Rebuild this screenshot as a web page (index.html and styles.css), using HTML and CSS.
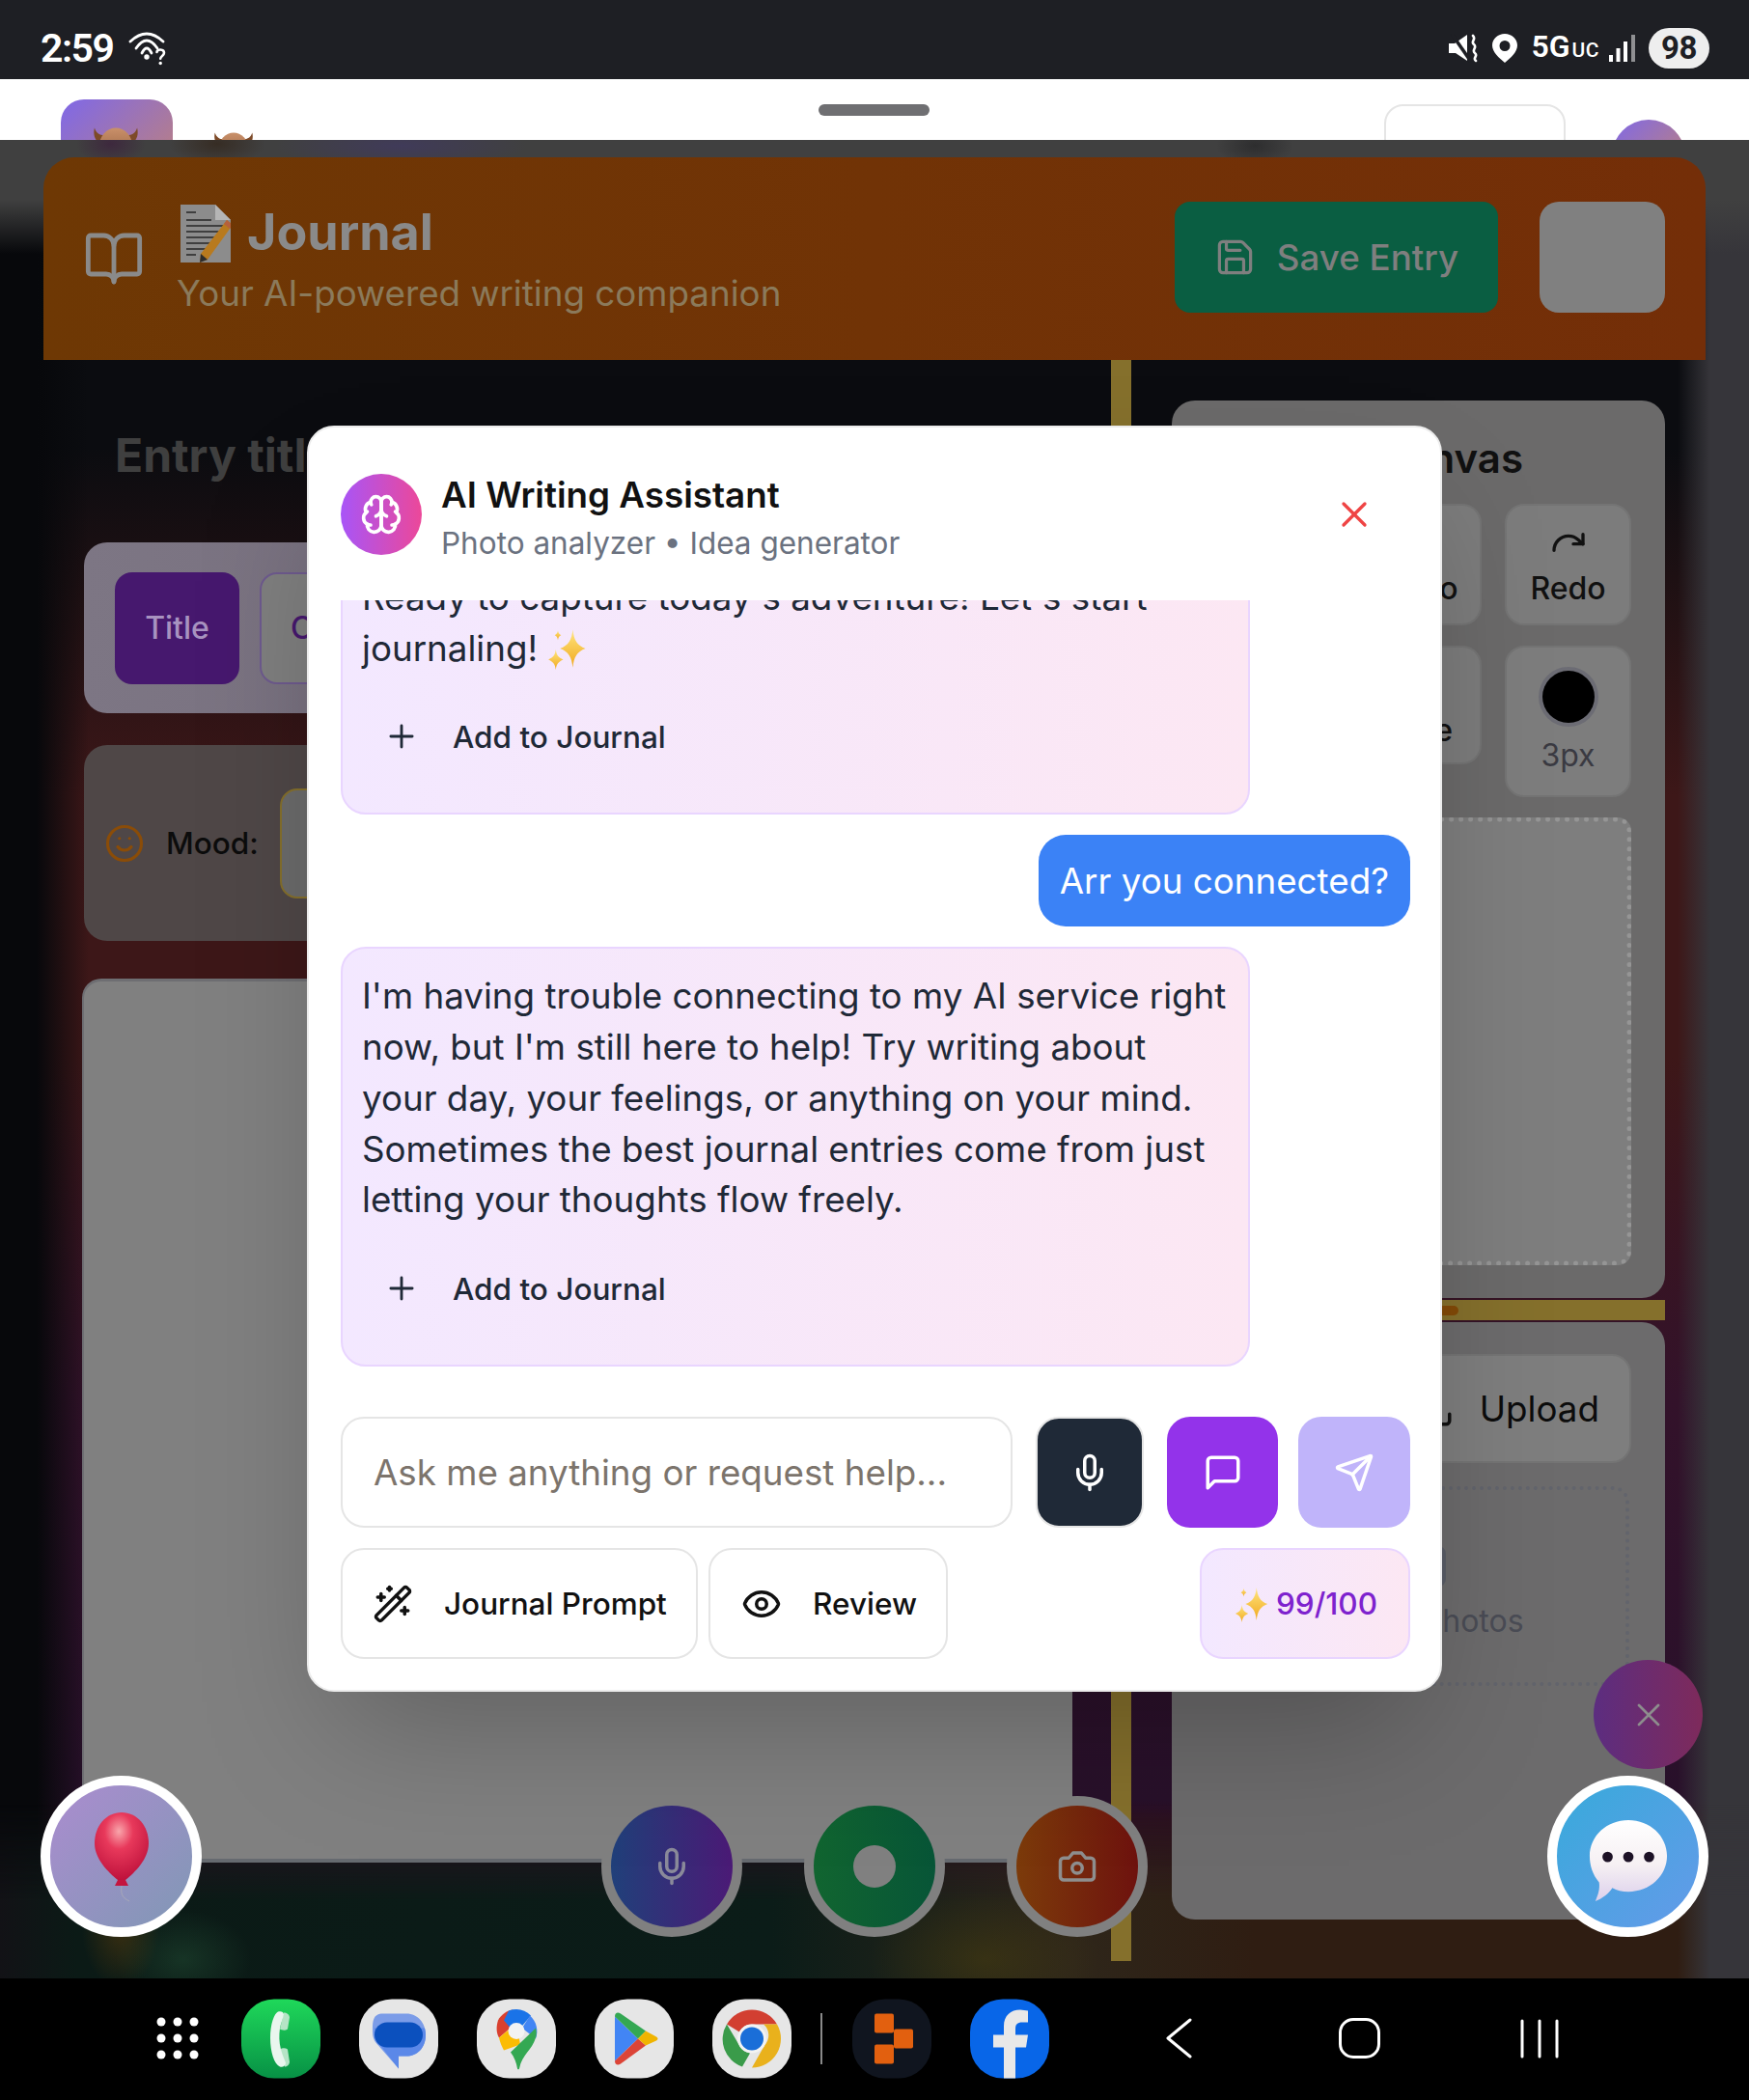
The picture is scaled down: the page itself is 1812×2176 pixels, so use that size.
FILE: index.html
```html
<!DOCTYPE html>
<html lang="en">
<head>
<meta charset="utf-8">
<title>AI Writing Assistant</title>
<link rel="stylesheet" href="styles.css">
</head>
<body>
<div class="device">
  <header class="statusbar">
    <div class="status-left">
      <span class="clock">2:59</span>
      <svg class="wifi" viewBox="0 0 40 36" fill="none" stroke="#fff" stroke-width="2.800" stroke-linecap="round"><path d="M2 10Q19-6 36 10"/><path d="M8 17Q19 1 30 17"/><path d="M14 22Q19 12 24 22"/><circle cx="19" cy="26" r="2.700" fill="#fff" stroke="none"/><path d="M29.500 21c0-3.500 7.500-3.500 7.500.8 0 3-3.800 3.200-3.800 6" stroke-width="2.600"/><circle cx="33.200" cy="32.500" r="1.700" fill="#fff" stroke="none"/></svg>
    </div>
    <div class="status-right">
      <svg class="mute" viewBox="0 0 30 30"><path d="M0 10h6L19 1v27L7 20H0z" fill="#fff"/><path d="M3 0l20 29" stroke="#1e1f24" stroke-width="3.500"/><path d="M25 2c4 4-3 6 1 9s-3 6 1 9-3 5 1 8" stroke="#fff" stroke-width="2.600" fill="none" stroke-linecap="round"/></svg>
      <svg class="pin" viewBox="0 0 26 30"><path fill-rule="evenodd" d="M13 0c7 0 13 5 13 12 0 7-7 13-13 18C7 25 0 19 0 12 0 5 6 0 13 0zm0 7a5.500 5.500 0 1 0 0 11 5.500 5.500 0 0 0 0-11z" fill="#fff"/></svg>
      <span class="net">5G<small>UC</small></span>
      <svg class="signal" viewBox="0 0 27 28" fill="#fff"><rect x="0" y="21" width="4" height="7"/><rect x="7.500" y="14" width="4" height="14"/><rect x="15" y="7" width="4" height="21"/><rect x="23" y="0" width="4" height="28" opacity=".5"/></svg>
      <span class="battery">98</span>
    </div>
  </header>

  <div class="topbar">
    <div class="top-brand">
      <div class="top-logo"><svg class="top-emoji" viewBox="0 0 50 30"><defs><linearGradient id="gdome" x1="0" y1="0" x2="0" y2="1"><stop offset="0" stop-color="#c9906a"/><stop offset="1" stop-color="#8f5a38"/></linearGradient></defs><path d="M2 0c2 6 6 8 10 8l-2 10C3 15 0 8 2 0zM48 0c-2 6-6 8-10 8l2 10c7-3 10-10 8-18z" fill="#7d4a28"/><ellipse cx="25" cy="20" rx="18" ry="20" fill="url(#gdome)"/></svg></div>
      <svg class="top-emoji small" viewBox="0 0 50 30"><path d="M2 0c2 6 6 8 10 8l-2 10C3 15 0 8 2 0zM48 0c-2 6-6 8-10 8l2 10c7-3 10-10 8-18z" fill="#7d4a28"/><ellipse cx="25" cy="20" rx="18" ry="20" fill="url(#gdome)"/></svg>
    </div>
    <div class="handle"></div>
    <div class="top-actions">
      <div class="ghost-btn"></div>
      <div class="top-avatar"></div>
    </div>
  </div>

  <main class="page">
    <section class="hero">
      <div class="hero-left">
        <svg class="ic hero-book" viewBox="0 0 24 24"><path d="M12 7v14"/><path d="M3 18a1 1 0 0 1-1-1V4a1 1 0 0 1 1-1h5a4 4 0 0 1 4 4 4 4 0 0 1 4-4h5a1 1 0 0 1 1 1v13a1 1 0 0 1-1 1h-6a3 3 0 0 0-3 3 3 3 0 0 0-3-3z"/></svg>
        <div class="hero-text">
          <h1 class="hero-title">
            <svg class="memo" viewBox="0 0 52 62"><path d="M0 2h36l16 16v44H0z" fill="#8c8c8c"/><path d="M36 2l16 16H36z" fill="#b5b5b5"/><path d="M6 10h10M6 18h26M6 24h40M6 30h40M6 36h32M6 42h26M6 48h20M6 54h10" stroke="#3f3f3f" stroke-width="2"/><path d="M48 18l6 5-26 36-8 3 1-9z" fill="#b87a1e"/><path d="M48 18l6 5-3 4-6-5z" fill="#b5603c"/><path d="M21 53l7 6-8 3z" fill="#2c2c2c"/></svg>
            <span>Journal</span>
          </h1>
          <p class="hero-sub">Your AI-powered writing companion</p>
        </div>
      </div>
      <div class="hero-actions">
        <button class="save-btn">
          <svg class="ic" viewBox="0 0 24 24"><path d="M15.200 3a2 2 0 0 1 1.400.6l3.800 3.800a2 2 0 0 1 .6 1.400V19a2 2 0 0 1-2 2H5a2 2 0 0 1-2-2V5a2 2 0 0 1 2-2z"/><path d="M17 21v-7a1 1 0 0 0-1-1H8a1 1 0 0 0-1 1v7"/><path d="M7 3v4a1 1 0 0 0 1 1h7"/></svg>
          <span>Save Entry</span>
        </button>
        <div class="gray-btn"></div>
      </div>
    </section>

    <div class="columns">
      <div class="col-main">
        <div class="entry-title">Entry title...</div>
        <div class="tabs-card">
          <div class="tab tab-active">Title</div>
          <div class="tab tab-outline">Content</div>
        </div>
        <div class="mood-card">
          <svg class="ic mood-ic" viewBox="0 0 24 24"><circle cx="12" cy="12" r="10"/><path d="M8 14s1.500 2 4 2 4-2 4-2"/><path d="M9 9h.01"/><path d="M15 9h.01"/></svg>
          <span class="mood-label">Mood:</span>
          <div class="mood-select"></div>
        </div>
        <div class="editor"></div>
      </div>

      <div class="divider-strip"></div>

      <aside class="col-side">
        <section class="canvas-panel">
          <h2 class="panel-title">Drawing Canvas</h2>
          <div class="tools">
            <div class="tool">
              <svg class="ic tool-ic" viewBox="0 0 24 24"><path d="M3 7v6h6"/><path d="M21 17a9 9 0 0 0-9-9 9 9 0 0 0-6 2.300L3 13"/></svg>
              <span>Undo</span>
            </div>
            <div class="tool">
              <svg class="ic tool-ic" viewBox="0 0 24 24"><path d="M21 7v6h-6"/><path d="M3 17a9 9 0 0 1 9-9 9 9 0 0 1 6 2.300l3 2.700"/></svg>
              <span>Redo</span>
            </div>
            <div class="tool tool-short"><span class="tool-tail">Line</span></div>
            <div class="tool tool-tall">
              <span class="stroke-dot"></span>
              <span class="stroke-size">3px</span>
            </div>
          </div>
          <div class="draw-area"></div>
        </section>
        <div class="side-strip"><span class="strip-fill"></span></div>
        <section class="upload-panel">
          <div class="upload-btn">
            <svg class="ic upload-ic" viewBox="0 0 24 24"><path d="M21 15v4a2 2 0 0 1-2 2H5a2 2 0 0 1-2-2v-4"/></svg>
            <span>Upload</span>
          </div>
          <div class="photos-empty">
            <div class="photo-frame"></div>
            <span class="photos-label">Upload photos</span>
          </div>
        </section>
      </aside>
    </div>

    <div class="page-foot"></div>
  </main>

  <nav class="navbar">
    <div class="dock">
      <svg class="apps" viewBox="0 0 44 44" fill="#fff"><circle cx="5" cy="5" r="4.500"/><circle cx="22" cy="5" r="4.500"/><circle cx="39" cy="5" r="4.500"/><circle cx="5" cy="22" r="4.500"/><circle cx="22" cy="22" r="4.500"/><circle cx="39" cy="22" r="4.500"/><circle cx="5" cy="39" r="4.500"/><circle cx="22" cy="39" r="4.500"/><circle cx="39" cy="39" r="4.500"/></svg>
      <div class="dock-icons">
        <svg class="app" viewBox="0 0 82 82"><defs><linearGradient id="gph" x1="0" y1="0" x2="0" y2="1"><stop offset="0" stop-color="#1fd85a"/><stop offset="1" stop-color="#079145"/></linearGradient></defs><rect width="82" height="82" rx="34" fill="url(#gph)"/><path d="M44 14c3 0 6 2 6 5l-2 12c-3 2-6 1-8 0zM40 52c2-1 5-2 8 0l2 13c0 3-3 5-5 5z" fill="#b5e4c6"/><path d="M38 13c3-1 6 0 6 3-1 4-3 9-4 14-1 7-1 15 1 22 1 4 3 9 5 14 0 3-3 5-6 4-6-3-10-15-10-30 0-14 4-25 8-27z" fill="#e9f6ee"/></svg>
        <svg class="app" viewBox="0 0 82 82"><rect width="82" height="82" rx="34" fill="#e6e6e6"/><path d="M25 15h24c12 0 20 10 20 22 0 14-9 22-20 22H41v13L20 48c-4-4-6-8-6-14 0-11 0-19 11-19z" fill="#7b9ce8"/><path d="M41 72V59h8c11 0 20-8 20-22 0-3-.500-5-1-7H16v4c0 6 2 10 6 14z" fill="#5b88e8"/><rect x="16" y="24" width="50" height="26" rx="13" fill="#0b50be"/></svg>
        <svg class="app" viewBox="0 0 82 82"><rect width="82" height="82" rx="34" fill="#e6e6e6"/><path d="M22 22c3-6 9-10 15-11l8 10-22 19c-3-5-3-12-1-18z" fill="#d9402f"/><path d="M33 12c9-3 17-1 23 5L40 36 28 22z" fill="#1a73e8"/><path d="M55 17c7 6 9 16 6 24L47 30z" fill="#4285f4"/><path d="M23 40L41 25l4 22-17 6c-2-4-4-8-5-13z" fill="#fbbc04"/><path d="M61 40C57 53 47 57 44 72c0 1-2 1-2 0-1-6-3-12-7-17l26-25c1 3 1 7 0 10z" fill="#34a853"/><circle cx="41" cy="33" r="8.500" fill="#f3f3f3"/></svg>
        <svg class="app" viewBox="0 0 82 82"><rect width="82" height="82" rx="34" fill="#e6e6e6"/><path d="M21 18v46l24-23z" fill="#4285f4"/><path d="M21 18c0-4 3-5 6-3l26 18-8 8z" fill="#34a853"/><path d="M21 64c0 4 3 5 6 3l26-19-8-7z" fill="#dc4437"/><path d="M53 33l11 6c2 1 2 3 0 4l-11 5-8-7z" fill="#f0b400"/></svg>
        <svg class="app" viewBox="0 0 82 82"><rect width="82" height="82" rx="34" fill="#e6e6e6"/><path d="M41 11a30 30 0 0 1 26 15H41a15 15 0 0 0-13 8L15 26a30 30 0 0 1 26-15z" fill="#d23f31"/><path d="M15 26l13 22a15 15 0 0 0 11 8L31 70A30 30 0 0 1 15 26z" fill="#3a9b4a"/><path d="M67 26a30 30 0 0 1-26 45l13-23a15 15 0 0 0-1-22z" fill="#e9b11c"/><circle cx="41" cy="41" r="15" fill="#f3f3f3"/><circle cx="41" cy="41" r="12" fill="#1a6ed8"/></svg>
        <span class="dock-sep"></span>
        <svg class="app" viewBox="0 0 82 82"><rect width="82" height="82" rx="34" fill="#10151f"/><rect x="23" y="15" width="20" height="20" rx="2" fill="#e2600f"/><rect x="43" y="31" width="20" height="20" rx="2" fill="#e2600f"/><rect x="23" y="47" width="20" height="20" rx="2" fill="#e2600f"/></svg>
        <svg class="app" viewBox="0 0 82 82"><rect width="82" height="82" rx="34" fill="#0866e8"/><path d="M35 82V50H24V37h11V28c0-11 7-17 17-17l8 1v12h-6c-5 0-7 2-7 7v6h13l-2 13H47v32z" fill="#e8e8e8"/></svg>
      </div>
    </div>
    <div class="nav-keys">
      <svg class="key-back" viewBox="0 0 27 42" fill="none" stroke="#fff" stroke-width="3" stroke-linecap="round" stroke-linejoin="round"><path d="M25 2L2 21l23 19"/></svg>
      <span class="key-home"></span>
      <svg class="key-recents" viewBox="0 0 40 41" stroke="#fff" stroke-width="3" stroke-linecap="round"><path d="M2 2v37M20 2v37M38 2v37"/></svg>
    </div>
  </nav>

  <!-- floating buttons over the dimmed page -->
  <button class="fab fab-balloon">
    <svg viewBox="0 0 60 100" class="fab-emoji"><defs><radialGradient id="gbal" cx=".45" cy=".28" r=".75"><stop offset="0" stop-color="#f9a6ac"/><stop offset=".35" stop-color="#e8395b"/><stop offset="1" stop-color="#bc0f3a"/></radialGradient></defs><path d="M30 2c16 0 28 14 28 32 0 16-14 30-24 38h-8C16 64 2 50 2 34 2 16 14 2 30 2z" fill="url(#gbal)"/><path d="M26 72h8l3 6H23z" fill="#c4153f"/><path d="M30 78c-1 8 0 12 8 16" fill="none" stroke="#a9a9b9" stroke-width="1"/></svg>
  </button>
  <button class="rec rec-mic"><svg class="ic" viewBox="0 0 24 24"><path d="M12 2a3 3 0 0 0-3 3v7a3 3 0 0 0 6 0V5a3 3 0 0 0-3-3Z"/><path d="M19 10v2a7 7 0 0 1-14 0v-2"/><path d="M12 19v3"/></svg></button>
  <button class="rec rec-stop"><span class="rec-dot"></span></button>
  <button class="rec rec-cam"><svg class="ic" viewBox="0 0 24 24"><path d="M14.500 4h-5L7 7H4a2 2 0 0 0-2 2v9a2 2 0 0 0 2 2h16a2 2 0 0 0 2-2V9a2 2 0 0 0-2-2h-3l-2.500-3z"/><circle cx="12" cy="13" r="3"/></svg></button>
  <button class="fab-close"><svg class="ic" viewBox="0 0 24 24"><path d="M18 6 6 18"/><path d="m6 6 12 12"/></svg></button>
  <button class="fab fab-chat">
    <svg viewBox="0 0 86 90" class="fab-emoji chat-emoji"><defs><linearGradient id="gbub" x1="0" y1="0" x2="0" y2="1"><stop offset="0" stop-color="#fff"/><stop offset=".55" stop-color="#f6f0f3"/><stop offset="1" stop-color="#dcd0ec"/></linearGradient></defs><path d="M43 2c23 0 41 17 41 38S66 78 43 78c-7 0-12-1-17-4-4 6-10 11-18 14 3-7 5-13 4-20C5 60 2 50 2 40 2 19 20 2 43 2z" fill="url(#gbub)"/><circle cx="21" cy="41" r="5.500" fill="#1d1226"/><circle cx="43" cy="41" r="5.500" fill="#1d1226"/><circle cx="65" cy="41" r="5.500" fill="#1d1226"/></svg>
  </button>

  <!-- modal dialog -->
  <section class="modal">
    <header class="modal-head">
      <div class="modal-id">
        <div class="brain-badge">
          <svg class="ic" viewBox="0 0 24 24"><path d="M12 5a3 3 0 1 0-5.997.125 4 4 0 0 0-2.526 5.770 4 4 0 0 0 .556 6.588A4 4 0 1 0 12 18Z"/><path d="M12 5a3 3 0 1 1 5.997.125 4 4 0 0 1 2.526 5.770 4 4 0 0 1-.556 6.588A4 4 0 1 1 12 18Z"/><path d="M15 13a4.500 4.500 0 0 1-3-4 4.500 4.500 0 0 1-3 4"/><path d="M17.599 6.500a3 3 0 0 0 .399-1.375"/><path d="M6.003 5.125A3 3 0 0 0 6.401 6.500"/><path d="M3.477 10.896a4 4 0 0 1 .585-.396"/><path d="M19.938 10.500a4 4 0 0 1 .585.396"/><path d="M6 18a4 4 0 0 1-1.967-.516"/><path d="M19.967 17.484A4 4 0 0 1 18 18"/></svg>
        </div>
        <div class="modal-titles">
          <h2 class="modal-title">AI Writing Assistant</h2>
          <p class="modal-sub">Photo analyzer • Idea generator</p>
        </div>
      </div>
      <svg class="ic modal-close" viewBox="0 0 24 24"><path d="M18 6 6 18"/><path d="m6 6 12 12"/></svg>
    </header>

    <div class="chat">
      <div class="bubble">
        <p class="bubble-text">Ahoy there, I'm your writing assistant!<br>Ready to capture today's adventure! Let's start journaling! <svg class="sparkle" viewBox="0 0 40 40"><use href="#sparkles"/></svg></p>
        <button class="add-btn"><svg class="ic" viewBox="0 0 24 24"><path d="M5 12h14"/><path d="M12 5v14"/></svg><span>Add to Journal</span></button>
      </div>
      <div class="user-msg">Arr you connected?</div>
      <div class="bubble">
        <p class="bubble-text">I'm having trouble connecting to my AI service right now, but I'm still here to help! Try writing about your day, your feelings, or anything on your mind. Sometimes the best journal entries come from just letting your thoughts flow freely.</p>
        <button class="add-btn"><svg class="ic" viewBox="0 0 24 24"><path d="M5 12h14"/><path d="M12 5v14"/></svg><span>Add to Journal</span></button>
      </div>
    </div>

    <div class="composer">
      <input class="ask" type="text" placeholder="Ask me anything or request help...">
      <button class="sq sq-mic"><svg class="ic" viewBox="0 0 24 24"><path d="M12 2a3 3 0 0 0-3 3v7a3 3 0 0 0 6 0V5a3 3 0 0 0-3-3Z"/><path d="M19 10v2a7 7 0 0 1-14 0v-2"/><path d="M12 19v3"/></svg></button>
      <button class="sq sq-chat"><svg class="ic" viewBox="0 0 24 24"><path d="M21 15a2 2 0 0 1-2 2H7l-4 4V5a2 2 0 0 1 2-2h14a2 2 0 0 1 2 2z"/></svg></button>
      <button class="sq sq-send"><svg class="ic" viewBox="0 0 24 24"><path d="M14.536 21.686a.5.5 0 0 0 .937-.024l6.500-19a.496.496 0 0 0-.635-.635l-19 6.500a.5.5 0 0 0-.024.937l7.930 3.180a2 2 0 0 1 1.112 1.110z"/><path d="m21.854 2.147-10.940 10.939"/></svg></button>
    </div>

    <div class="quick">
      <button class="chip chip-prompt"><svg class="ic" viewBox="0 0 24 24"><path d="m21.640 3.640-1.280-1.280a1.210 1.210 0 0 0-1.720 0L2.360 18.640a1.210 1.210 0 0 0 0 1.720l1.280 1.280a1.200 1.200 0 0 0 1.720 0L21.640 5.360a1.200 1.200 0 0 0 0-1.720"/><path d="m14 7 3 3"/><path d="M5 6v4"/><path d="M19 14v4"/><path d="M10 2v2"/><path d="M7 8H3"/><path d="M21 16h-4"/><path d="M11 3H9"/></svg><span>Journal Prompt</span></button>
      <button class="chip chip-review"><svg class="ic" viewBox="0 0 24 24"><path d="M2.062 12.348a1 1 0 0 1 0-.696 10.750 10.750 0 0 1 19.876 0 1 1 0 0 1 0 .696 10.750 10.750 0 0 1-19.876 0"/><circle cx="12" cy="12" r="3"/></svg><span>Review</span></button>
      <div class="credits"><svg class="sparkle" viewBox="0 0 40 40"><use href="#sparkles"/></svg><span>99/100</span></div>
    </div>
  </section>

  <svg class="defs" width="0" height="0"><defs><linearGradient id="gsp" x1="0" y1="0" x2="0" y2="1"><stop offset="0" stop-color="#ffe680"/><stop offset="1" stop-color="#f0a81e"/></linearGradient><g id="sparkles"><path d="M24 2c1 10 4 15 12 18-8 3-11 8-12 18-1-10-4-15-12-18 8-3 11-8 12-18z" fill="url(#gsp)"/><path d="M8 21c.7 5.500 2.600 7.500 7 9.500-4.400 2-6.300 4-7 9.500-.7-5.500-2.600-7.500-7-9.500 4.400-2 6.300-4 7-9.500z" fill="url(#gsp)"/><path d="M10 3c.3 2.500 1.200 3.500 3 4.500-1.800 1-2.700 2-3 4.500-.3-2.500-1.200-3.500-3-4.500 1.800-1 2.700-2 3-4.500z" fill="url(#gsp)"/></g></defs></svg>
</div>
</body>
</html>
```
FILE: styles.css
```css
* { box-sizing: border-box; margin: 0; padding: 0; }
html, body { width: 1812px; height: 2176px; overflow: hidden; background: #000; }
body { font-family: "Inter", "Liberation Sans", sans-serif; }
button { font-family: inherit; border: 0; background: none; }
.ic { fill: none; stroke: currentColor; stroke-width: 2; stroke-linecap: round; stroke-linejoin: round; display: block; flex: none; }
.defs { position: absolute; }

.device { position: relative; width: 1812px; height: 2176px; display: flex; flex-direction: column; overflow: hidden; }

/* status bar */
.statusbar { height: 82px; background: #1e1f24; display: flex; justify-content: space-between; align-items: center; padding: 18px 41px 0 42px; color: #fff; flex: none; }
.status-left { display: flex; align-items: center; gap: 16px; }
.clock { font-family: "Roboto", sans-serif; font-size: 41px; font-weight: 600; letter-spacing: -1.500px; }
.wifi { width: 40px; height: 36px; margin-top: 2px; }
.status-right { display: flex; align-items: center; }
.mute { width: 30px; height: 30px; }
.pin { width: 26px; height: 30px; margin-left: 15px; }
.net { font-family: "Roboto", sans-serif; font-size: 32px; font-weight: 600; margin-left: 14px; line-height: 36px; }
.net small { font-size: 21px; font-weight: 500; margin-left: 2px; letter-spacing: .5px; }
.signal { width: 27px; height: 28px; margin-left: 10px; }
.battery { width: 63px; height: 42px; border-radius: 21px; background: #eeeeee; color: #1e1f24; font-family: "Roboto", sans-serif; font-size: 33px; font-weight: 700; display: flex; align-items: center; justify-content: center; margin-left: 14px; letter-spacing: -.5px; margin-top: -1px; }

/* top app bar */
.topbar { height: 63px; background: #fff; overflow: hidden; flex: none; display: flex; justify-content: space-between; padding: 0 66px 0 63px; position: relative; }
.top-brand { display: flex; gap: 42px; padding-top: 21px; }
.top-logo { width: 116px; height: 116px; border-radius: 24px; background: linear-gradient(135deg, #7f68e8, #c98668); display: flex; justify-content: center; padding-top: 29px; flex: none; }
.top-emoji { width: 48px; height: 30px; flex: none; margin-left: -2px; }
.top-emoji.small { width: 42px; height: 26px; margin-top: 34px; margin-left: 0; }
.handle { position: absolute; left: 848px; top: 26px; width: 115px; height: 12px; border-radius: 6px; background: #6f6f72; }
.top-actions { display: flex; gap: 48px; padding-top: 26px; }
.ghost-btn { width: 188px; height: 100px; border: 2px solid #e5e5e5; border-radius: 20px; }
.top-avatar { width: 76px; height: 76px; border-radius: 50%; background: linear-gradient(135deg, #7f68e8, #c98668); margin-top: 16px; }

/* dimmed page */
.page { flex: 1; position: relative; overflow: hidden; display: flex; flex-direction: column; padding: 18px 0 0;
  background:
    radial-gradient(ellipse 130px 26px at 415px 6px, rgba(64,54,110,.55), transparent),
    radial-gradient(ellipse 36px 22px at 115px 4px, rgba(60,30,60,.7), transparent),
    radial-gradient(ellipse 50px 22px at 225px 4px, rgba(50,36,24,.7), transparent),
    radial-gradient(ellipse 40px 22px at 1300px 6px, rgba(30,30,32,.55), transparent),
    linear-gradient(180deg, #404040 0, #404040 62px, rgba(10,11,14,0) 118px),
    linear-gradient(90deg, #07080b 0, #07080b 38px, rgba(7,8,11,0) 92px),
    linear-gradient(90deg, rgba(54,53,58,0) 1738px, #36353a 1772px),
    linear-gradient(180deg, #0b0c10 0, #0b0c10 320px, #3d1718 680px, #3d1718 950px, #33122a 1300px, #28102a 1720px, #2b0f22 1740px);
}
.hero { margin: 0 45px; height: 210px; border-radius: 32px 32px 0 0; background: linear-gradient(90deg, #6e3804, #742e08); display: flex; justify-content: space-between; align-items: center; padding: 0 42px 4px 41px; flex: none; position: relative; z-index: 1; }
.hero-left { display: flex; align-items: center; gap: 33px; }
.hero-book { width: 64px; height: 64px; color: #8a8a8a; margin-top: 4px; stroke-width: 1.800; }
.hero-text { display: flex; flex-direction: column; margin-top: 8px; }
.hero-title { display: flex; align-items: center; gap: 17px; font-size: 52px; font-weight: 700; color: #8a8a8a; line-height: 62px; margin-left: 4px; }
.memo { width: 52px; height: 62px; }
.hero-sub { font-size: 36.750px; color: #8b7a5b; line-height: 54px; margin-top: 5px; }
.hero-actions { display: flex; gap: 43px; }
.save-btn { width: 335px; height: 115px; border-radius: 16px; background: #0a5e42; color: #7f7f7f; display: flex; align-items: center; justify-content: center; gap: 22px; font-size: 36.750px; font-weight: 500; }
.save-btn .ic { width: 43px; height: 43px; stroke-width: 1.800; }
.gray-btn { width: 130px; height: 115px; border-radius: 20px; background: #808080; }

.columns { display: flex; flex: 1; padding-left: 85px; position: relative; min-height: 0; z-index: 1; }
.col-main { width: 1026px; display: flex; flex-direction: column; flex: none; }
.entry-title { font-size: 48px; font-weight: 700; color: #3f3f3f; line-height: 60px; margin: 69px 0 0 34px; }
.tabs-card { margin: 60px 0 0 2px; height: 177px; border-radius: 24px; background: linear-gradient(90deg, #7d7684, #6d6475); display: flex; gap: 21px; padding: 31px 32px; }
.tab { width: 129px; height: 116px; border-radius: 18px; display: flex; align-items: center; justify-content: center; font-size: 32px; font-weight: 500; padding-bottom: 2px; }
.tab-active { background: #46186e; color: #a893c0; }
.tab-outline { width: 200px; background: #7f7f7f; border: 2px solid #6e5a8e; color: #46186e; justify-content: flex-start; padding-left: 30px; overflow: hidden; }
.mood-card { margin: 33px 0 0 2px; height: 203px; border-radius: 24px; background: #4f4747; display: flex; align-items: center; gap: 22px; padding: 0 0 0 21px; }
.mood-ic { width: 42px; height: 42px; color: #8a4c08; stroke-width: 1.800; }
.mood-label { font-size: 31.500px; font-weight: 500; color: #0c0c0c; }
.mood-select { width: 300px; height: 114px; margin-left: 0; border: 2px solid #85702c; border-radius: 18px; background: #6b6b6b; }
.editor { margin-top: 39px; height: 916px; border-radius: 20px 0 0 0; background: #808080; border-top: 3px solid #6e6e72; border-left: 2px solid #6e6e72; border-bottom: 4px solid #666a70; position: relative; flex: none; }

.divider-strip { width: 21px; margin-left: 40px; height: 1659px; background: #85702c; flex: none; }
.col-side { width: 511px; margin-left: 42px; display: flex; flex-direction: column; flex: none; }
.canvas-panel { margin-top: 42px; height: 930px; border-radius: 24px; background: #6b6a6a; padding: 0 35px 0 0; display: flex; flex-direction: column; align-items: flex-end; flex: none; }
.panel-title { font-size: 42px; font-weight: 600; color: #111; line-height: 54px; margin: 33px 112px 0 0; white-space: nowrap; }
.tools { display: grid; grid-template-columns: 131px 131px; column-gap: 24px; row-gap: 21px; margin-top: 20px; align-items: start; }
.tool { height: 126px; border-radius: 20px; background: #7c7c7c; border: 2px solid #747474; display: flex; flex-direction: column; align-items: center; justify-content: center; gap: 8px; font-size: 32px; font-weight: 500; color: #111; position: relative; }
.tool-ic { width: 40px; height: 40px; color: #111; }
.tool-short { height: 123px; }
.tool-tail { position: absolute; right: 28px; top: 66px; line-height: 40px; }
.tool-tall { height: 157px; background: #7d7d7d; justify-content: flex-start; padding-top: 24px; gap: 14px; }
.stroke-dot { width: 54px; height: 54px; border-radius: 50%; background: #000; box-shadow: 0 0 0 4px #6c6c74; flex: none; }
.stroke-size { color: #3a3a42; font-weight: 400; font-size: 32px; line-height: 40px; }
.draw-area { width: 550px; height: 464px; margin-top: 21px; background: #7e7e7e; border: 5px dotted #959595; border-radius: 14px; flex: none; }
.side-strip { height: 21px; margin-top: 2px; background: #85702c; display: flex; align-items: center; flex: none; }
.strip-fill { width: 297px; height: 10px; background: #834a07; border-radius: 0 5px 5px 0; }
.upload-panel { margin-top: 2px; height: 619px; border-radius: 24px; background: #6c6b6c; padding: 33px 35px 0 0; display: flex; flex-direction: column; align-items: flex-end; flex: none; }
.upload-btn { width: 360px; height: 113px; border-radius: 20px; background: #7e7e7e; border: 2px solid #747474; display: flex; align-items: center; justify-content: flex-end; gap: 26px; padding-right: 31px; font-size: 36.750px; font-weight: 400; color: #0c0c0c; flex: none; }
.upload-ic { width: 42px; height: 42px; color: #111; }
.photos-empty { width: 440px; height: 207px; margin: 24px 2px 0 0; border: 4px dotted #62646c; border-radius: 16px; display: flex; flex-direction: column; align-items: center; padding: 58px 0 0; flex: none; }
.photo-frame { width: 60px; height: 42px; border: 5px solid #5a5d66; border-radius: 8px; flex: none; }
.photos-label { font-size: 32px; color: #4a4c55; margin-top: 16px; line-height: 40px; white-space: nowrap; }

.page-foot { position: absolute; left: 0; right: 0; bottom: 0; height: 180px; pointer-events: none;
  background:
    linear-gradient(90deg, rgba(54,53,58,0) 1738px, #36353a 1772px),
    radial-gradient(ellipse 40px 60px at 125px 130px, rgba(120,75,10,.4), transparent),
    radial-gradient(ellipse 70px 50px at 190px 160px, rgba(40,90,60,.4), transparent),
    radial-gradient(ellipse 120px 70px at 1020px 160px, rgba(90,75,10,.35), transparent),
    linear-gradient(90deg, #121216 0, #0b1a16 80px, #0b1c18 800px, #2e261a 1110px, #2f1d12 1300px, #2f1d12 1730px);
  -webkit-mask-image: linear-gradient(180deg, transparent 0, #000 100px);
  mask-image: linear-gradient(180deg, transparent 0, #000 100px);
}

/* bottom nav */
.navbar { height: 126px; background: #000; flex: none; display: flex; align-items: center; padding: 0 197px 2px 162px; justify-content: space-between; }
.dock { display: flex; align-items: center; gap: 44px; }
.apps { width: 44px; height: 44px; }
.dock-icons { display: flex; align-items: center; gap: 40px; }
.app { width: 82px; height: 83px; flex: none; }
.dock-sep { width: 2px; height: 53px; background: #8a8a8a; margin: 0 -9px 0 -10px; }
.nav-keys { display: flex; align-items: center; gap: 152px; }
.key-back { width: 27px; height: 42px; }
.key-home { width: 43px; height: 42px; border: 3px solid #fff; border-radius: 15px; }
.key-recents { width: 40px; height: 41px; margin-left: -7px; }

/* floating buttons */
.fab { position: absolute; top: 1840px; width: 167px; height: 167px; border-radius: 50%; border: 10px solid #fff; display: flex; align-items: center; justify-content: center; z-index: 3; }
.fab-balloon { left: 42px; background: linear-gradient(135deg, #ab8ccf, #8098b5); }
.fab-chat { left: 1603px; background: linear-gradient(135deg, #38aadb, #649ae9); }
.fab-emoji { display: block; }
.fab-balloon .fab-emoji { width: 60px; height: 100px; margin-top: 4px; }
.chat-emoji { width: 84px; height: 88px; margin-top: 8px; }
.rec { position: absolute; top: 1861px; width: 146px; height: 146px; border-radius: 50%; border: 10px solid #808080; display: flex; align-items: center; justify-content: center; color: #8a8a9a; z-index: 3; }
.rec .ic { width: 42px; height: 42px; }
.rec-mic { left: 623px; background: linear-gradient(90deg, #20407a, #4b1a76); }
.rec-stop { left: 833px; background: linear-gradient(90deg, #116530, #075537); }
.rec-dot { width: 44px; height: 44px; border-radius: 50%; background: #808080; }
.rec-cam { left: 1043px; background: linear-gradient(90deg, #7c3b0a, #6e120e); color: #8e8e8e; }
.fab-close { position: absolute; left: 1651px; top: 1720px; width: 113px; height: 113px; border-radius: 50%; background: linear-gradient(90deg, #5c2d80, #7e2a5b); color: #8d8d8d; display: flex; align-items: center; justify-content: center; z-index: 3; }
.fab-close .ic { width: 40px; height: 40px; stroke-width: 1.600; }

/* modal */
.modal { position: absolute; left: 318px; top: 441px; width: 1176px; height: 1312px; background: #fff; border-radius: 28px; border: 2px solid #ececec; padding: 0 31px 32px 33px; display: flex; flex-direction: column; z-index: 4; box-shadow: 0 65px 130px -32px rgba(0,0,0,.25); }
.modal-head { height: 179px; display: flex; align-items: center; justify-content: space-between; flex: none; padding-right: 36px; }
.modal-id { display: flex; align-items: center; gap: 20px; }
.brain-badge { width: 84px; height: 84px; border-radius: 50%; background: linear-gradient(90deg, #a855f7, #ec4899); color: #fff; display: flex; align-items: center; justify-content: center; flex: none; }
.brain-badge .ic { width: 44px; height: 44px; }
.modal-title { font-size: 36.750px; font-weight: 600; color: #111; line-height: 52px; margin-top: 6px; }
.modal-sub { font-size: 31.500px; color: #6b7280; line-height: 44px; margin-top: 2px; }
.modal-close { width: 44px; height: 44px; color: #ef4444; stroke-width: 1.800; }

.chat { flex: 1; min-height: 0; overflow: hidden; display: flex; flex-direction: column; justify-content: flex-end; gap: 21px; padding-bottom: 52px; }
.bubble { width: 942px; flex: none; border-radius: 26px; border: 2px solid #e9d5ff; background: linear-gradient(90deg, #f3e8ff, #fce7f3); padding: 23px 21px 24px 20px; }
.bubble-text { font-size: 36.750px; line-height: 52.700px; color: #1f2937; }
.sparkle { display: inline-block; width: 44px; height: 44px; vertical-align: -9px; }
.add-btn { display: flex; align-items: center; gap: 34px; height: 110px; margin-top: 10px; padding-left: 22px; font-size: 31.500px; font-weight: 500; color: #1f2937; }
.add-btn .ic { width: 38px; height: 38px; stroke-width: 1.800; }
.user-msg { align-self: flex-end; height: 95px; border-radius: 28px; background: #3b82f6; color: #fff; font-size: 36.750px; display: flex; align-items: center; padding: 0 22px; flex: none; }

.composer { display: flex; align-items: stretch; height: 115px; gap: 21px; flex: none; }
.ask { width: 696px; flex: none; border: 2px solid #e5e5e5; border-radius: 24px; padding: 0 32px; font-family: inherit; font-size: 36.750px; color: #111; outline: none; background: #fff; }
.ask::placeholder { color: #7c746c; opacity: 1; }
.sq { width: 115px; flex: none; border-radius: 24px; display: flex; align-items: center; justify-content: center; color: #fff; }
.sq .ic { width: 42px; height: 42px; }
.sq-mic { width: 112px; background: #1f2937; border: 2px solid #e5e5e5; margin-left: 3px; }
.sq-chat { background: #9333ea; margin-left: 3px; }
.sq-send { width: 116px; background: #c0b4fa; }

.quick { display: flex; align-items: stretch; height: 115px; margin-top: 21px; gap: 11px; flex: none; }
.chip { height: 115px; border: 2px solid #e5e5e5; border-radius: 24px; background: #fff; display: flex; align-items: center; font-size: 31.500px; font-weight: 500; color: #111; flex: none; }
.chip .ic { width: 42px; height: 42px; }
.chip-prompt { width: 370px; padding-left: 31px; gap: 32px; }
.chip-review { width: 248px; padding-left: 32px; gap: 32px; }
.credits { margin-left: auto; width: 218px; border: 2px solid #e9d5ff; border-radius: 24px; background: linear-gradient(90deg, #f3e8ff, #fce7f3); display: flex; align-items: center; justify-content: center; gap: 5px; font-size: 31.500px; font-weight: 500; color: #7e22ce; padding-left: 2px; }
.credits .sparkle { width: 38px; height: 38px; }
```
